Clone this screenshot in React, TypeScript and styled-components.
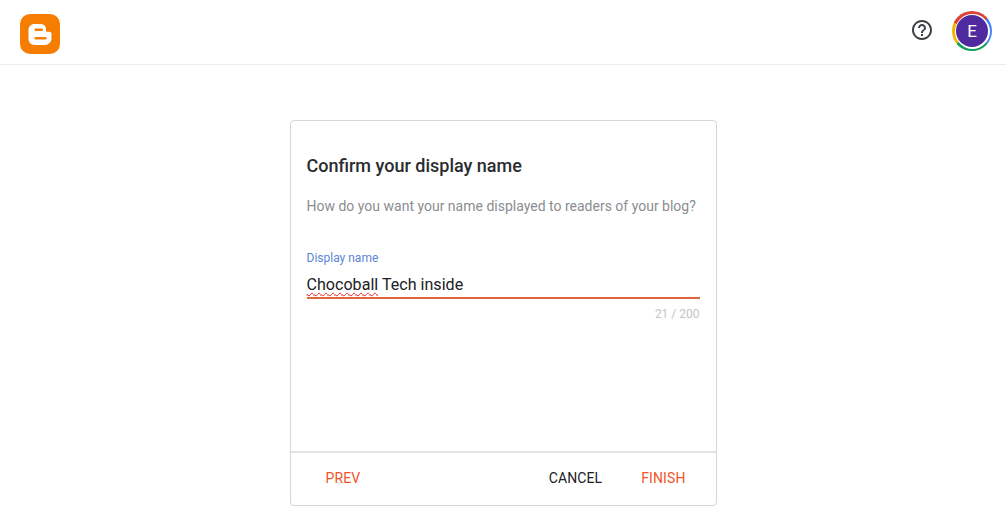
import styled, { createGlobalStyle } from "styled-components";

const GlobalStyle = createGlobalStyle`
  html, body {
    margin: 0;
    padding: 0;
    background: #fff;
    font-family: Roboto, "Liberation Sans", sans-serif;
  }
`;

const Page = styled.div`
  width: 1006px;
  height: 528px;
  overflow: hidden;
  display: flex;
  flex-direction: column;
`;

const Header = styled.header`
  height: 64px;
  flex: none;
  display: flex;
  align-items: flex-start;
  justify-content: space-between;
  padding: 0 14px 0 20px;
  border-bottom: 1px solid #ececec;
`;

const LogoWrap = styled.div`
  margin-top: 14px;
  height: 40px;
`;

const HeaderActions = styled.div`
  margin-top: 11px;
  display: flex;
  align-items: center;
  gap: 18px;
`;

const HelpWrap = styled.div`
  height: 24px;
  margin-bottom: 2px;
`;

const AvatarRing = styled.div`
  width: 40px;
  height: 40px;
  border-radius: 50%;
  display: flex;
  align-items: center;
  justify-content: center;
  background: conic-gradient(
    #db4437 0deg 50deg,
    #4285f4 50deg 130deg,
    #0f9d58 130deg 230deg,
    #f4b400 230deg 295deg,
    #db4437 295deg 360deg
  );
`;

const AvatarInner = styled.div`
  width: 35px;
  height: 35px;
  border-radius: 50%;
  background: #fff;
  display: flex;
  align-items: center;
  justify-content: center;
`;

const Avatar = styled.div`
  width: 32px;
  height: 32px;
  border-radius: 50%;
  background: #4e2a9e;
  color: #fff;
  font-size: 17px;
  display: flex;
  align-items: center;
  justify-content: center;
`;

const Main = styled.main`
  flex: 1;
  display: flex;
  justify-content: center;
  padding-top: 55px;
`;

const Card = styled.section`
  width: 427px;
  height: 386px;
  box-sizing: border-box;
  border: 1px solid #d6d6d6;
  border-radius: 4px;
  display: flex;
  flex-direction: column;
`;

const CardBody = styled.div`
  flex: 1;
  padding: 34px 16px 0;
`;

const Title = styled.h1`
  margin: 0;
  font-size: 18px;
  line-height: 22px;
  font-weight: 500;
  color: #2a2b2e;
`;

const Description = styled.p`
  margin: 19px 0 0;
  font-size: 14px;
  line-height: 20px;
  color: #8a8d91;
`;

const Field = styled.div`
  margin-top: 34px;
`;

const FieldLabel = styled.label`
  display: block;
  font-size: 12px;
  line-height: 16px;
  color: #5c85d6;
`;

const FieldValue = styled.div`
  margin-top: 7px;
  height: 24px;
  font-size: 16.1px;
  line-height: 24px;
  color: #202124;
  border-bottom: 2px solid #e0643c;
`;

const Misspelled = styled.span`
  text-decoration: underline wavy #e8201a 1px;
  text-underline-offset: 2px;
`;

const Counter = styled.div`
  margin-top: 8px;
  text-align: right;
  font-size: 12px;
  line-height: 14px;
  color: #c4c4c4;
`;

const CardFooter = styled.footer`
  height: 54px;
  flex: none;
  display: flex;
  align-items: center;
  padding: 0 30px 2px 35px;
  box-sizing: border-box;
  border-top: 2px solid #e3e3e3;
`;

const FooterButton = styled.button<{ $accent?: boolean }>`
  border: none;
  background: none;
  padding: 0;
  font-family: inherit;
  font-size: 14px;
  font-weight: 400;
  letter-spacing: 0.1px;
  color: ${(p) => (p.$accent ? "#f0562a" : "#202124")};
`;

const FooterSpacer = styled.div`
  flex: 1;
`;

const FooterGap = styled.div`
  width: 39px;
`;

const BloggerLogo = () => (
  <svg width="40" height="40" viewBox="0 0 40 40">
    <rect width="40" height="40" rx="10" fill="#f57d00" />
    <path
      d="M14.5 10h6c3.6 0 5.5 2.4 5.5 5.4v.8c0 1 .6 1.6 1.6 1.6h1.4c1.4 0 2.5.9 2.5 2.2v4.6c0 3.6-3 6.4-6.5 6.4H14.5C11 31 8.500 28.200 8.500 24.800V16c0-3.500 2.500-6 6-6z"
      fill="#fff"
    />
    <rect x="14.500" y="14.500" width="8.500" height="2.600" rx="1.300" fill="#f57d00" />
    <rect x="14.500" y="23" width="12" height="2.600" rx="1.300" fill="#f57d00" />
  </svg>
);

const HelpIcon = () => (
  <svg width="24" height="24" viewBox="0 0 24 24" fill="#3c4043">
    <path d="M11 18h2v-2h-2v2zm1-16C6.48 2 2 6.48 2 12s4.48 10 10 10 10-4.48 10-10S17.52 2 12 2zm0 18c-4.41 0-8-3.59-8-8s3.59-8 8-8 8 3.59 8 8-3.59 8-8 8zm0-14c-2.21 0-4 1.79-4 4h2c0-1.1.9-2 2-2s2 .9 2 2c0 2-3 1.75-3 5h2c0-2.25 3-2.500 3-5 0-2.210-1.790-4-4-4z" />
  </svg>
);

const App = () => {
  return (
    <Page>
      <GlobalStyle />
      <Header>
        <LogoWrap>
          <BloggerLogo />
        </LogoWrap>
        <HeaderActions>
          <HelpWrap>
            <HelpIcon />
          </HelpWrap>
          <AvatarRing>
            <AvatarInner>
              <Avatar>E</Avatar>
            </AvatarInner>
          </AvatarRing>
        </HeaderActions>
      </Header>
      <Main>
        <Card>
          <CardBody>
            <Title>Confirm your display name</Title>
            <Description>
              How do you want your name displayed to readers of your blog?
            </Description>
            <Field>
              <FieldLabel>Display name</FieldLabel>
              <FieldValue>
                <Misspelled>Chocoball</Misspelled> Tech inside
              </FieldValue>
              <Counter>21 / 200</Counter>
            </Field>
          </CardBody>
          <CardFooter>
            <FooterButton $accent>PREV</FooterButton>
            <FooterSpacer />
            <FooterButton>CANCEL</FooterButton>
            <FooterGap />
            <FooterButton $accent>FINISH</FooterButton>
          </CardFooter>
        </Card>
      </Main>
    </Page>
  );
};

export default App;
